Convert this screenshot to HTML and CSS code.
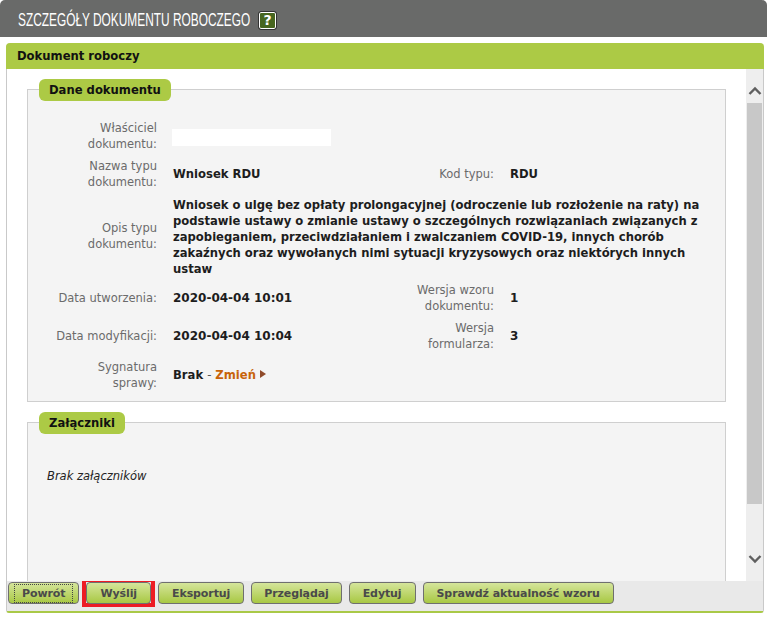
FILE: index.html
```html
<!DOCTYPE html>
<html lang="pl">
<head>
<meta charset="utf-8">
<title>Szczegóły dokumentu roboczego</title>
<link rel="stylesheet" href="styles.css">
</head>
<body>
<header class="topbar">
  <h1 class="title">SZCZEGÓŁY DOKUMENTU ROBOCZEGO</h1>
  <span class="help">?</span>
</header>
<main class="panel">
  <h2 class="panel-head">Dokument roboczy</h2>
  <div class="panel-body">
    <div class="content">
      <section class="box box-data">
        <h3 class="legend">Dane dokumentu</h3>
        <div class="fields">
          <div class="label r1">Właściciel dokumentu:</div>
          <div class="value r1"><span class="blank"></span></div>

          <div class="label">Nazwa typu dokumentu:</div>
          <div class="value">Wniosek RDU</div>
          <div class="label label-r">Kod typu:</div>
          <div class="value">RDU</div>

          <div class="label">Opis typu dokumentu:</div>
          <div class="value wide">Wniosek o ulgę bez opłaty prolongacyjnej (odroczenie lub rozłożenie na raty) na podstawie ustawy o zmianie ustawy o szczególnych rozwiązaniach związanych z zapobieganiem, przeciwdziałaniem i zwalczaniem COVID-19, innych chorób zakaźnych oraz wywołanych nimi sytuacji kryzysowych oraz niektórych innych ustaw</div>

          <div class="label">Data utworzenia:</div>
          <div class="value num">2020-04-04 10:01</div>
          <div class="label label-r">Wersja wzoru dokumentu:</div>
          <div class="value num">1</div>

          <div class="label">Data modyfikacji:</div>
          <div class="value num">2020-04-04 10:04</div>
          <div class="label label-r">Wersja formularza:</div>
          <div class="value num">3</div>

          <div class="label sig">Sygnatura sprawy:</div>
          <div class="value sig">Brak <span class="dash">-</span> <a class="link" href="#">Zmień</a><svg class="arrow" width="6" height="8" viewBox="0 0 6 8"><path d="M0 0l6 4-6 4z" fill="#8f4a2a"/></svg></div>
        </div>
      </section>
      <section class="box box-att">
        <h3 class="legend">Załączniki</h3>
        <p class="empty">Brak załączników</p>
      </section>
    </div>
    <div class="scrollbar">
      <svg class="chev" width="14" height="10" viewBox="0 0 14 10"><path d="M1.500 8L7 2.500 12.500 8" fill="none" stroke="#5f5f5f" stroke-width="2.400"/></svg>
      <div class="thumb"></div>
      <svg class="chev chev-down" width="14" height="10" viewBox="0 0 14 10"><path d="M1.500 2L7 7.500 12.500 2" fill="none" stroke="#5f5f5f" stroke-width="2.400"/></svg>
    </div>
  </div>
  <footer class="actions">
    <button class="btn focus" type="button"><span>Powrót</span></button>
    <span class="mark"><button class="btn" type="button"><span>Wyślij</span></button></span>
    <button class="btn" type="button"><span>Eksportuj</span></button>
    <button class="btn btn-tight" type="button"><span>Przeglądaj</span></button>
    <button class="btn" type="button"><span>Edytuj</span></button>
    <button class="btn" type="button"><span>Sprawdź aktualność wzoru</span></button>
  </footer>
</main>
</body>
</html>
```
FILE: styles.css
```css
* { box-sizing: border-box; }
html, body { margin: 0; padding: 0; height: 100%; }
body {
  background: #fff;
  font-family: "DejaVu Sans", Verdana, sans-serif;
  font-size: 12px;
  color: #111;
  overflow: hidden;
}
.topbar {
  height: 37px;
  background: #696a69;
  border-radius: 5px 5px 0 0;
  display: flex;
  align-items: center;
  padding: 3px 0 0 18px;
  gap: 9px;
}
.title {
  margin: 0;
  width: 232px;
  white-space: nowrap;
  font: 400 18px "Liberation Sans", sans-serif;
  color: #fff;
  transform: scaleX(.66);
  transform-origin: 0 50%;
}
.help {
  width: 17px;
  height: 17px;
  background: #47661f;
  border: 1px solid #fff;
  outline: 1px solid #333;
  border-radius: 2px;
  color: #fff;
  font: 700 14px/15px "DejaVu Sans", sans-serif;
  text-align: center;
}
.panel {
  margin: 6px 3px 0 6px;
  height: 570px;
  display: flex;
  flex-direction: column;
  border: 1px solid #c9c9c9;
  border-top: 0;
  border-bottom: 2px solid #a9c947;
  border-radius: 5px 5px 3px 3px;
}
.panel-head {
  margin: 0 -1px;
  height: 26px;
  padding: 0 0 0 11px;
  background: #acca45;
  border-radius: 4px 4px 0 0;
  font-size: 11.6px;
  font-weight: 700;
  line-height: 27px;
  color: #111;
}
.panel-body {
  flex: 1;
  min-height: 0;
  display: flex;
  overflow: hidden;
}
.content {
  flex: 1;
  min-width: 0;
  padding: 20px 20px 0 20px;
  overflow: hidden;
}
.box {
  position: relative;
  background: #f4f4f4;
  border: 1px solid #cfcfcf;
  padding: 30px 0 0;
}
.box-data { height: 313px; }
.box-att { height: 180px; margin-top: 20px; }
.legend {
  position: absolute;
  left: 11px;
  top: -11px;
  margin: 0;
  height: 22px;
  padding: 0 10px;
  background: #acca45;
  border-radius: 6px;
  font-size: 11.6px;
  font-weight: 700;
  line-height: 22px;
  color: #111;
}
.fields {
  display: grid;
  grid-template-columns: 129px 165px 140px 1fr;
  column-gap: 16px;
  row-gap: 6px;
  align-items: center;
  line-height: 16px;
}
.label {
  text-align: right;
  color: #6b6b6b;
  font-size: 11.5px;
  padding-left: 24px;
}
.label-r { padding-left: 60px; }
.value {
  font-weight: 700;
  color: #1d1d1d;
  font-size: 11.6px;
}
.num { font-size: 12px; }
.wide { grid-column: 2 / 5; padding-right: 6px; margin: 1px 0 -1px; }
.r1 + .r1 { grid-column: 2 / 5; }
.sig { margin-top: 1px; }
.blank { display: block; width: 159px; height: 17px; background: #fff; margin: 2px 0 0 -1px; }
.dash { font-weight: 400; color: #555; }
.link { color: #c8640a; text-decoration: none; }
.arrow { margin-left: 4px; vertical-align: 1px; }
.empty {
  margin: 16px 0 0 19px;
  font-style: italic;
  font-size: 11.5px;
  color: #222;
}
.scrollbar {
  width: 17px;
  background: #eeeeee;
  display: flex;
  flex-direction: column;
  align-items: center;
  padding: 17px 0;
  gap: 7px;
}
.thumb { flex: none; height: 401px; width: 15px; background: #c8c8c8; }
.chev { flex: none; }
.chev-down { margin-top: auto; }
.actions {
  height: 30px;
  background: #e9e9e9;
  display: flex;
  align-items: flex-start;
  gap: 7px;
  padding: 1px 0 0 1px;
}
.btn {
  height: 22px;
  padding: 0 13px;
  border: 1px solid #6f6f6f;
  border-radius: 4px;
  background: linear-gradient(#d5e59b, #a8c843);
  font: 700 11px "DejaVu Sans", sans-serif;
  letter-spacing: -.1px;
  color: #4a4a4a;
}
.btn span { display: block; }
.btn-tight { padding: 0 12px; }
.focus span { outline: 1px dotted #444; padding: 2px 7px; margin: 0 -7px; }
.mark { display: block; border: 4px solid #ed1c24; margin: -4px; height: 29px; }
```
